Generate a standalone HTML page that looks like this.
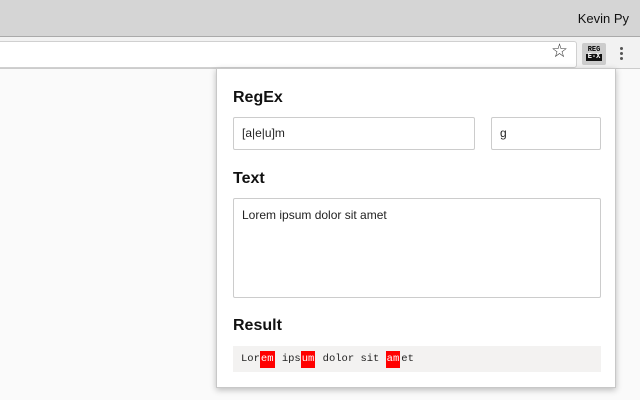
<!DOCTYPE html>
<html><head><style>
body{margin:0;width:640px;height:400px;overflow:hidden;background:#fafafa;font-family:"Liberation Sans",sans-serif;position:relative}
.top{position:absolute;left:0;top:0;width:640px;height:36px;background:#d5d5d5;border-bottom:1px solid #aaa}
.name{position:absolute;right:11px;top:11px;font-size:13px;color:#111}
.tool{position:absolute;left:0;top:37px;width:640px;height:31px;background:#f2f2f2;border-bottom:1px solid #ccc}
.addr{position:absolute;left:-5px;top:4px;width:580px;height:25px;background:#fff;border:1px solid #d0d0d0;border-radius:3px}
.star{position:absolute;left:551px;top:3px;font-size:19px;color:#333}
.ext{position:absolute;left:582px;top:6px;width:24px;height:22px;background:#ccc;border-radius:2px}
.ext div{position:absolute;left:4px;width:16px;font:bold 7px "Liberation Mono",monospace;text-align:center;line-height:7px}
.dots{position:absolute;left:620px;top:10px;width:3px}
.dots i{display:block;width:3px;height:3px;background:#555;border-radius:50%;margin-bottom:2px}
.pop{position:absolute;left:216px;top:68px;width:400px;height:320px;background:#fff;border:1px solid #c8c8c8;box-shadow:0 2px 6px rgba(0,0,0,.25);box-sizing:border-box}
h{position:absolute;left:16px;font-weight:bold;font-size:16px;color:#111}
.in{position:absolute;border:1px solid #ccc;border-radius:2px;box-sizing:border-box;font-size:12px;color:#222;padding:0 8px}
.res{position:absolute;left:16px;top:277px;width:368px;height:26px;background:#f3f2f1;font:10.5px "Liberation Mono",monospace;line-height:26px;padding-left:8px;box-sizing:border-box;color:#222}
.res b{background:#f00;color:#fff;font-weight:normal;padding:2px 1px 3px;margin-right:1px}
</style></head><body>
<div class="top"><span class="name">Kevin Py</span></div>
<div class="tool"><div class="addr"></div><span class="star">☆</span>
<div class="ext"><div style="top:4px">REG</div><div style="top:11px;background:#111;color:#fff">E-X</div></div>
<div class="dots"><i></i><i></i><i></i></div></div>
<div class="pop">
<h style="top:20px">RegEx</h>
<div class="in" style="left:16px;top:48px;width:242px;height:33px;line-height:31px">[a|e|u]m</div>
<div class="in" style="left:274px;top:48px;width:110px;height:33px;line-height:31px">g</div>
<h style="top:101px">Text</h>
<div class="in" style="left:16px;top:129px;width:368px;height:100px;padding-top:8px;line-height:16px">Lorem ipsum dolor sit amet</div>
<h style="top:248px">Result</h>
<div class="res">Lor<b>em</b> ips<b>um</b> dolor sit <b>am</b>et</div>
</div>
</body></html>
